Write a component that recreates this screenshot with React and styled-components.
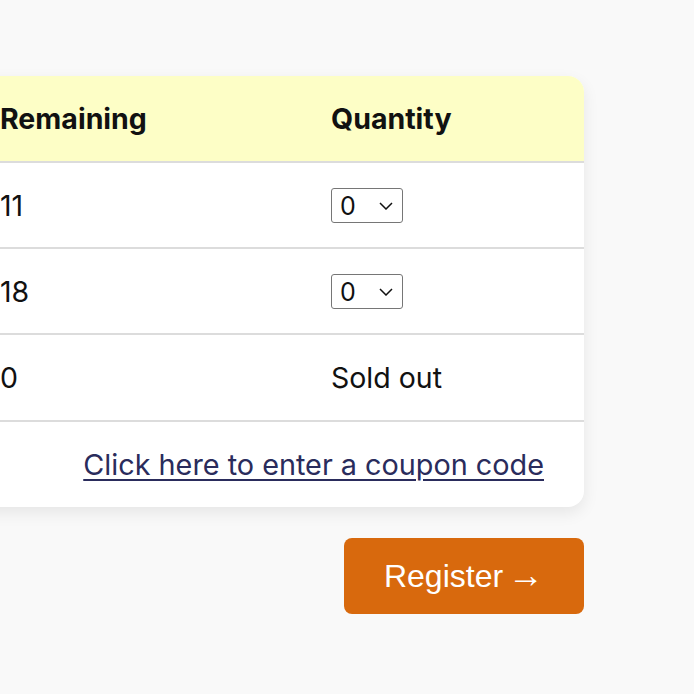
import React from "react";
import styled, { createGlobalStyle } from "styled-components";

const GlobalStyle = createGlobalStyle`
  html, body {
    margin: 0;
    padding: 0;
    background-color: #f9f9f9;
    overflow: hidden;
  }
  body {
    font-family: Inter, "Noto Sans", sans-serif;
    color: #111;
  }
`;

const Page = styled.div`
  display: flex;
  flex-direction: column;
  align-items: flex-end;
  gap: 31px;
  width: 584px;
  padding-top: 76px;
`;

const Card = styled.div`
  width: 624px;
  background-color: #ffffff;
  border-radius: 16px;
  box-shadow: 0 6px 16px rgba(0, 0, 0, 0.08);
  overflow: hidden;
`;

const Table = styled.table`
  width: 100%;
  border-collapse: collapse;
  table-layout: fixed;
`;

const HeadRow = styled.tr`
  background-color: #fdfec6;
`;

const Th = styled.th`
  width: ${(props) => props.width || "auto"};
  height: 85px;
  padding: 0 0 0 40px;
  text-align: left;
  font-size: 28.5px;
  font-weight: 700;
  border-bottom: 2px solid #dcdcdc;
`;

const Td = styled.td`
  height: ${(props) => props.height || "84px"};
  padding: 0 0 0 40px;
  font-size: 28.5px;
  font-weight: 400;
  border-bottom: 2px solid #dcdcdc;
  vertical-align: middle;
`;

const CouponCell = styled.td`
  height: 85px;
  padding: 0 40px 0 0;
  text-align: right;
`;

const CouponLink = styled.a`
  font-size: 28.8px;
  color: #2a2c5c;
  text-decoration: underline;
  text-underline-offset: 4px;
  text-decoration-thickness: 2px;
`;

const Select = styled.select`
  width: 72px;
  height: 35px;
  font-family: Inter, "Noto Sans", sans-serif;
  font-size: 25px;
  color: #111;
  background-color: #fff;
  border: 1px solid #767676;
  border-radius: 3px;
  padding: 0 0 0 8px;
  appearance: none;
  background-image: url("data:image/svg+xml,%3Csvg xmlns='http://www.w3.org/2000/svg' width='14' height='8' viewBox='0 0 14 8'%3E%3Cpath d='M1 1l6 6 6-6' fill='none' stroke='%23111' stroke-width='1.5'/%3E%3C/svg%3E");
  background-repeat: no-repeat;
  background-position: right 9px center;
`;

const RegisterButton = styled.button`
  height: 76px;
  padding: 0 40px;
  border: none;
  border-radius: 8px;
  background-color: #d8690d;
  color: #ffffff;
  font-family: "Liberation Sans", Arial, sans-serif;
  font-size: 32px;
  line-height: 1;
  cursor: pointer;
`;

const Arrow = styled.span`
  margin-left: -4px;
  font-size: 36px;
  line-height: 0;
`;

const tickets = [
  { id: 1, remaining: 11 },
  { id: 2, remaining: 18 },
  { id: 3, remaining: 0 },
];

export default function App() {
  return (
    <>
      <GlobalStyle />
      <Page>
        <Card>
          <Table>
            <thead>
              <HeadRow>
                <Th width="291px">Remaining</Th>
                <Th>Quantity</Th>
              </HeadRow>
            </thead>
            <tbody>
              {tickets.map((t) => {
                const rowHeight = t.remaining > 0 ? "84px" : "85px";
                return (
                  <tr key={t.id}>
                    <Td height={rowHeight}>{t.remaining}</Td>
                    <Td height={rowHeight}>
                      {t.remaining > 0 ? (
                        <Select defaultValue="0">
                          {Array.from({ length: 11 }, (_, i) => (
                            <option key={i} value={i}>
                              {i}
                            </option>
                          ))}
                        </Select>
                      ) : (
                        "Sold out"
                      )}
                    </Td>
                  </tr>
                );
              })}
              <tr>
                <CouponCell colSpan={2}>
                  <CouponLink href="#">Click here to enter a coupon code</CouponLink>
                </CouponCell>
              </tr>
            </tbody>
          </Table>
        </Card>
        <RegisterButton>
          Register <Arrow>→</Arrow>
        </RegisterButton>
      </Page>
    </>
  );
}
